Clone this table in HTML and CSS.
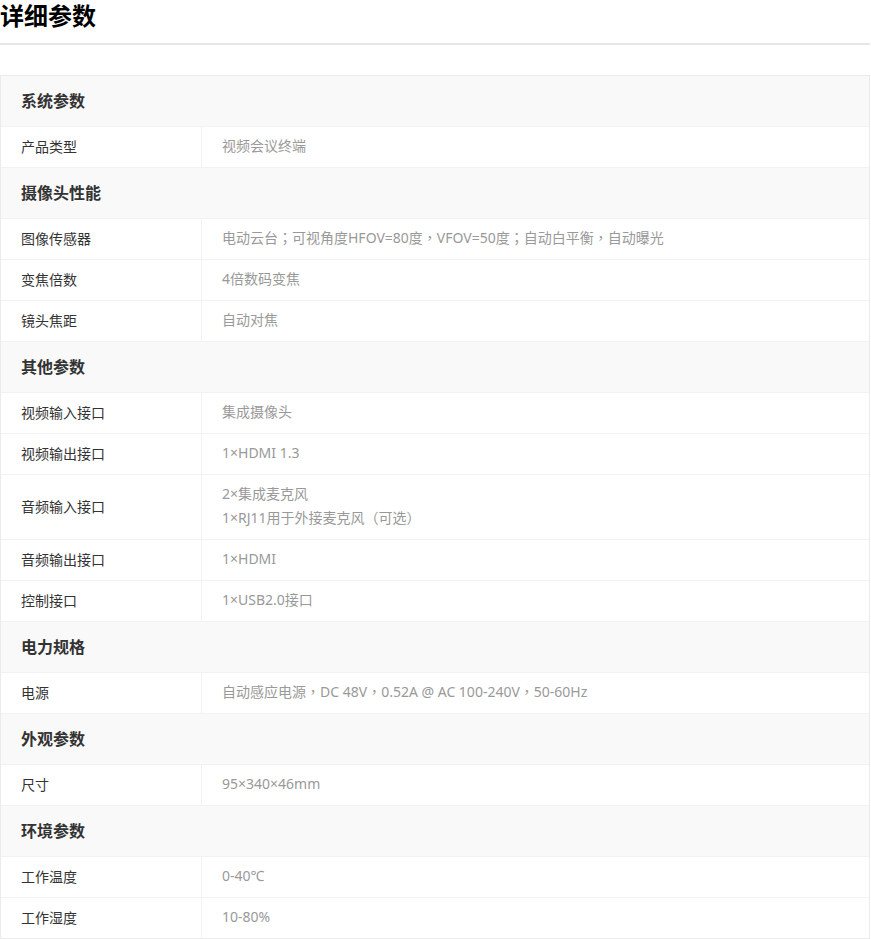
FILE: index.html
```html
<!DOCTYPE html>
<html lang="zh-CN">
<head>
<meta charset="utf-8">
<title>详细参数</title>
<link rel="stylesheet" href="styles.css">
</head>
<body>
<div class="page">
  <h2 class="title">详细参数</h2>
  <div class="specs">
    <div class="sec-head">系统参数</div>
    <div class="row"><div class="label">产品类型</div><div class="value">视频会议终端</div></div>

    <div class="sec-head">摄像头性能</div>
    <div class="row"><div class="label">图像传感器</div><div class="value">电动云台<span class="fw" lang="zh-TW">；</span>可视角度HFOV=80度<span class="fw" lang="zh-TW">，</span>VFOV=50度<span class="fw" lang="zh-TW">；</span>自动白平衡<span class="fw" lang="zh-TW">，</span>自动曝光</div></div>
    <div class="row"><div class="label">变焦倍数</div><div class="value">4倍数码变焦</div></div>
    <div class="row"><div class="label">镜头焦距</div><div class="value">自动对焦</div></div>

    <div class="sec-head">其他参数</div>
    <div class="row"><div class="label">视频输入接口</div><div class="value">集成摄像头</div></div>
    <div class="row"><div class="label">视频输出接口</div><div class="value">1×HDMI 1.3</div></div>
    <div class="row"><div class="label">音频输入接口</div><div class="value">2×集成麦克风<br>1×RJ11用于外接麦克风<span class="fw" lang="zh-TW">（</span>可选<span class="fw" lang="zh-TW">）</span></div></div>
    <div class="row"><div class="label">音频输出接口</div><div class="value">1×HDMI</div></div>
    <div class="row"><div class="label">控制接口</div><div class="value">1×USB2.0接口</div></div>

    <div class="sec-head">电力规格</div>
    <div class="row"><div class="label">电源</div><div class="value">自动感应电源<span class="fw" lang="zh-TW">，</span>DC 48V<span class="fw" lang="zh-TW">，</span>0.52A @ AC 100-240V<span class="fw" lang="zh-TW">，</span>50-60Hz</div></div>

    <div class="sec-head">外观参数</div>
    <div class="row"><div class="label">尺寸</div><div class="value">95×340×46mm</div></div>

    <div class="sec-head">环境参数</div>
    <div class="row"><div class="label">工作温度</div><div class="value">0-40℃</div></div>
    <div class="row last"><div class="label">工作湿度</div><div class="value">10-80%</div></div>
  </div>
</div>
</body>
</html>
```
FILE: styles.css
```css
html, body {
  margin: 0;
  padding: 0;
  background: #fff;
}
body {
  font-family: "Noto Sans CJK SC", "Liberation Sans", sans-serif;
  color: #333;
}
.page {
  width: 870px;
}
.title {
  margin: 0;
  font-size: 24px;
  line-height: 30px;
  font-weight: 700;
  color: #000;
  padding-bottom: 13px;
  border-bottom: 2px solid #e6e6e6;
}
.specs {
  margin-top: 30px;
  border: 1px solid #ebebeb;
}
.sec-head {
  height: 24px;
  padding: 12px 0 14px 20px;
  line-height: 24px;
  background: #f9f9f9;
  font-size: 16px;
  font-weight: 700;
  color: #333;
  border-bottom: 1px solid #f2f2f2;
}
.row {
  display: flex;
  border-bottom: 1px solid #f2f2f2;
}
.row.last {
  border-bottom: none;
}
.label {
  width: 180px;
  flex: none;
  display: flex;
  align-items: center;
  padding: 7px 0 9px 20px;
  font-size: 14px;
  line-height: 24px;
  color: #333;
  border-right: 1px solid #f2f2f2;
}
.value {
  flex: 1;
  padding: 7px 0 9px 20px;
  font-family: "Noto Sans", "Noto Sans CJK SC", sans-serif;
  font-size: 14px;
  line-height: 24px;
  color: #999;
}
.fw {
  font-family: "Noto Sans CJK TC", "Noto Sans CJK SC", sans-serif;
  line-height: 1;
}
```
